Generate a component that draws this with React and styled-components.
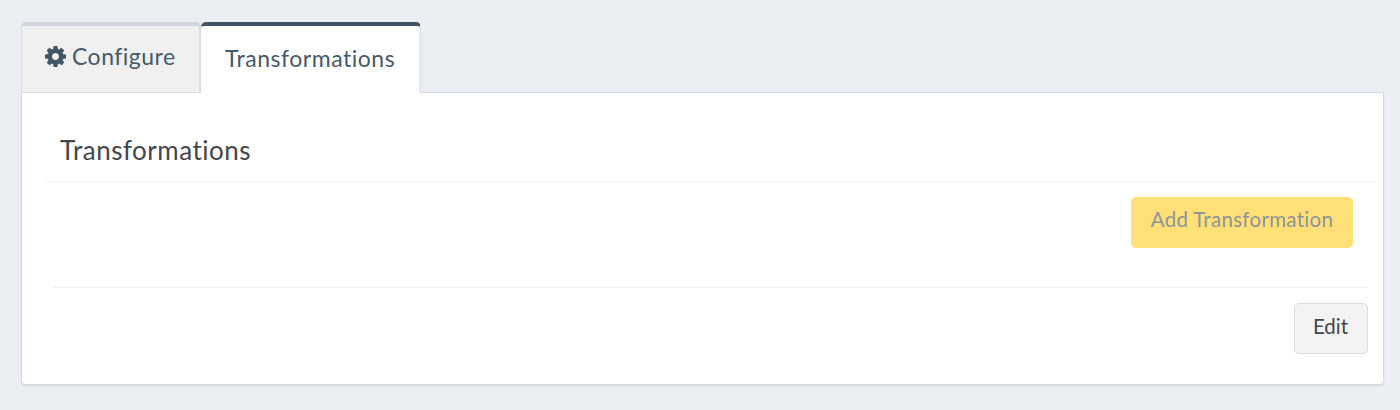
import React from 'react';
import styled, { createGlobalStyle } from 'styled-components';

const GlobalStyle = createGlobalStyle`
  * {
    box-sizing: border-box;
  }
  body {
    margin: 0;
    background: #ebeff4;
    font-family: Lato, "Liberation Sans", sans-serif;
    color: #454648;
  }
`;

const Page = styled.div`
  height: 410px;
  padding: 22px 16px 0 21px;
`;

const TabList = styled.div`
  display: flex;
  height: 71px;
  margin-bottom: -1px;
  position: relative;
`;

const Tab = styled.div`
  display: flex;
  width: ${props => props.$width}px;
  height: ${props => (props.$active ? 71 : 70)}px;
  padding: ${props => (props.$active ? '18px 0 0 24px' : '16px 0 0 22px')};
  font-size: 23px;
  line-height: 29px;
  color: #465a6b;
  white-space: nowrap;
  background: ${props => (props.$active ? '#fff' : '#f0f0f0')};
  border: 1px solid #dcdde0;
  border-right-width: ${props => (props.$active ? 1 : 2)}px;
  border-left-width: ${props => (props.$active ? 0 : 1)}px;
  border-top: 4px solid ${props => (props.$active ? '#425565' : '#d2d6df')};
  border-bottom: 0;
  border-radius: 5px 5px 0 0;
  box-shadow: ${props => (props.$active ? 'inset -1px 0 0 #f0f0f1' : 'none')};
`;

const CogIcon = styled.svg`
  width: 21px;
  height: 21px;
  margin: 4px 6px 0 1px;
  fill: #425565;
`;

const Label = styled.span`
  font-variant-ligatures: none;
  letter-spacing: ${props => props.$spacing || 0}px;
`;

const Panel = styled.div`
  height: 293px;
  padding: 40px 7px 0 23px;
  background: #fff;
  border: 1px solid #d9dadc;
  border-radius: 0 0 4px 4px;
  box-shadow: 0 1px 2px rgba(0, 0, 0, 0.1);
`;

const Heading = styled.h2`
  height: 49px;
  margin: 0;
  padding-left: 15px;
  font-size: 26px;
  font-weight: 400;
  line-height: 34px;
  border-bottom: 1px solid #f2f2f2;
`;

const Row = styled.div`
  display: flex;
  justify-content: flex-end;
  padding: 15px 23px 39px 0;
`;

const Footer = styled.div`
  display: flex;
  justify-content: flex-end;
  margin: 0 8px;
  padding-top: 15px;
  border-top: 1px solid #f2f2f2;
`;

const Button = styled.button`
  width: ${props => (props.$primary ? 222 : 74)}px;
  height: 51px;
  padding: ${props => (props.$primary ? '0 0 7px' : '0 1px 5px 0')};
  font-family: inherit;
  font-size: 20.5px;
  color: ${props => (props.$primary ? '#8d9497' : '#454648')};
  background: ${props => (props.$primary ? '#ffe077' : '#f3f3f3')};
  border: 1px solid ${props => (props.$primary ? '#ffe077' : '#dcdcdc')};
  border-radius: 5px;
`;

const App = () => (
  <>
    <GlobalStyle />
    <Page>
      <TabList>
        <Tab $width={180}>
          <CogIcon viewBox="0 128 1536 1536">
            <path d="M1024 896q0-106-75-181t-181-75-181 75-75 181 75 181 181 75 181-75 75-181zm512-109v222q0 12-8 23t-20 13l-185 28q-19 54-39 91 35 50 107 138 10 12 10 25t-9 23q-27 37-99 108t-94 71q-12 0-26-9l-138-108q-44 23-91 38-16 136-29 186-7 28-36 28h-222q-14 0-24.5-8.5t-11.5-21.5l-28-184q-49-16-90-37l-141 107q-10 9-25 9-14 0-25-11-126-114-165-168-7-10-7-23 0-12 8-23 15-21 51-66.5t54-70.5q-27-50-41-99l-183-27q-13-2-21-12.5t-8-23.5v-222q0-12 8-23t19-13l186-28q14-46 39-92-40-57-107-138-10-12-10-24 0-10 9-23 26-36 98.500-107.500t94.500-71.500q13 0 26 10l138 107q44-23 91-38 16-136 29-186 7-28 36-28h222q14 0 24.500 8.500t11.500 21.500l28 184q49 16 90 37l142-107q9-9 24-9 13 0 25 10 129 119 165 170 7 8 7 22 0 12-8 23-15 21-51 66.500t-54 70.500q26 50 41 98l183 28q13 2 21 12.500t8 23.500z" />
          </CogIcon>
          <Label $spacing={0.48}>Configure</Label>
        </Tab>
        <Tab $active $width={220}>
          <Label $spacing={0.52}>Transformations</Label>
        </Tab>
      </TabList>
      <Panel>
        <Heading>
          <Label $spacing={0.5}>Transformations</Label>
        </Heading>
        <Row>
          <Button $primary>
            <Label $spacing={0.3}>Add Transformation</Label>
          </Button>
        </Row>
        <Footer>
          <Button>
            <Label>Edit</Label>
          </Button>
        </Footer>
      </Panel>
    </Page>
  </>
);

export default App;
